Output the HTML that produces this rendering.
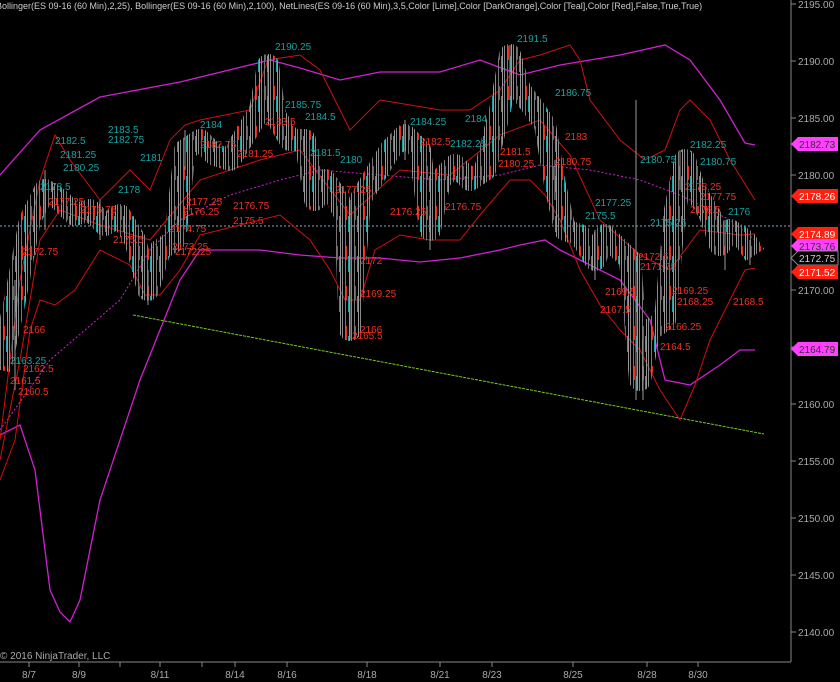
<!DOCTYPE html>
<html><head><meta charset="utf-8"><style>
html,body{margin:0;padding:0;background:#000;width:840px;height:682px;overflow:hidden}
svg{display:block}
text{font-family:"Liberation Sans",sans-serif}
</style></head><body>
<svg width="840" height="682" viewBox="0 0 840 682" xmlns="http://www.w3.org/2000/svg">
<defs>
<pattern id="cd" x="0" y="0" width="9" height="40" patternUnits="userSpaceOnUse">
<rect x="0" y="0" width="1" height="40" fill="#8a8a8a"/>
<rect x="3" y="6" width="2" height="14" fill="#e03020"/>
<rect x="3" y="0" width="1" height="40" fill="#777"/>
<rect x="6" y="16" width="2" height="16" fill="#20a0a0"/>
<rect x="7" y="0" width="1" height="40" fill="#999"/>
</pattern>
</defs>
<rect width="840" height="682" fill="#000"/>
<line x1="791" y1="0" x2="791" y2="662" stroke="#888" stroke-width="1"/>
<line x1="0" y1="662" x2="791" y2="662" stroke="#888" stroke-width="1"/>
<g fill="#aaa" font-size="10">
<text x="798" y="8">2195.00</text><text x="798" y="65">2190.00</text><text x="798" y="122">2185.00</text><text x="798" y="179">2180.00</text>
<text x="798" y="465">2155.00</text><text x="798" y="522">2150.00</text><text x="798" y="579">2145.00</text><text x="798" y="636">2140.00</text>
<text x="798" y="294">2170.00</text><text x="798" y="408">2160.00</text><text x="798" y="351">2165.00</text>
</g>
<g stroke="#888">
<line x1="791" y1="4" x2="796" y2="4"/><line x1="791" y1="61" x2="796" y2="61"/><line x1="791" y1="118" x2="796" y2="118"/><line x1="791" y1="175" x2="796" y2="175"/><line x1="791" y1="290" x2="796" y2="290"/><line x1="791" y1="347" x2="796" y2="347"/><line x1="791" y1="404" x2="796" y2="404"/><line x1="791" y1="461" x2="796" y2="461"/><line x1="791" y1="518" x2="796" y2="518"/><line x1="791" y1="575" x2="796" y2="575"/><line x1="791" y1="632" x2="796" y2="632"/>
<line x1="29" y1="662" x2="29" y2="667"/><line x1="79" y1="662" x2="79" y2="667"/><line x1="120" y1="662" x2="120" y2="667"/><line x1="160" y1="662" x2="160" y2="667"/><line x1="202" y1="662" x2="202" y2="667"/><line x1="235" y1="662" x2="235" y2="667"/><line x1="287" y1="662" x2="287" y2="667"/><line x1="367" y1="662" x2="367" y2="667"/><line x1="440" y1="662" x2="440" y2="667"/><line x1="492" y1="662" x2="492" y2="667"/><line x1="573" y1="662" x2="573" y2="667"/><line x1="647" y1="662" x2="647" y2="667"/><line x1="698" y1="662" x2="698" y2="667"/>
</g>
<g fill="#aaa" font-size="10" text-anchor="middle">
<text x="29" y="678">8/7</text><text x="79" y="678">8/9</text><text x="160" y="678">8/11</text><text x="235" y="678">8/14</text><text x="287" y="678">8/16</text><text x="367" y="678">8/18</text><text x="440" y="678">8/21</text><text x="492" y="678">8/23</text><text x="573" y="678">8/25</text><text x="647" y="678">8/28</text><text x="698" y="678">8/30</text>
</g>
<text x="0" y="659" fill="#aaa" font-size="10">© 2016 NinjaTrader, LLC</text>
<text x="-4" y="9" fill="#ccc" font-size="9">Bollinger(ES 09-16 (60 Min),2,25), Bollinger(ES 09-16 (60 Min),2,100), NetLines(ES 09-16 (60 Min),3,5,Color [Lime],Color [DarkOrange],Color [Teal],Color [Red],False,True,True)</text>
<line x1="0" y1="226" x2="791" y2="226" stroke="#8ab" stroke-dasharray="2,2"/>
<line x1="133" y1="315" x2="764" y2="434" stroke="#7c2" stroke-dasharray="3,1" stroke-width="1"/>
<g fill="none" stroke="#d020d0" stroke-width="1.3">
<polyline points="0,175 40,130 100,97 180,82 270,60 300,68 340,80 380,72 440,72 480,60 520,75 560,65 620,55 665,45 690,60 720,100 745,143 755,145"/>
<polyline points="0,435 20,425 35,470 50,590 60,612 70,622 80,600 100,500 140,380 180,280 200,250 260,250 300,255 340,258 380,258 420,262 460,258 500,250 520,245 545,240 560,250 580,260 620,280 650,320 665,380 690,385 720,365 740,350 755,350"/>
<polyline stroke-dasharray="2,2" stroke-width="1" points="0,430 50,360 120,300 150,250 180,220 230,195 280,180 320,170 380,175 440,180 500,175 540,165 590,170 640,180 680,195 730,220 755,240"/>
</g>
<g fill="none" stroke="#d01010" stroke-width="1">
<polyline points="0,440 20,280 40,180 55,135 70,160 100,200 130,170 150,190 170,140 185,125 200,120 250,110 268,60 300,55 320,70 350,130 380,100 410,105 440,110 470,110 500,90 520,60 540,55 570,45 580,60 590,100 620,140 645,160 665,150 680,110 690,100 710,120 730,160 755,200"/>
<polyline points="0,480 15,440 30,330 40,300 55,305 75,290 100,250 130,265 145,295 160,295 180,270 200,235 240,225 280,215 310,240 330,270 345,300 360,300 375,250 400,235 430,240 460,240 480,215 510,180 530,180 545,195 560,220 580,270 600,305 620,330 640,350 660,390 680,420 695,385 710,340 730,300 745,270 755,268"/>
<polyline points="0,460 20,360 40,240 60,210 100,225 150,240 200,180 260,160 300,150 350,215 400,170 450,175 500,135 540,120 570,155 600,220 640,255 670,270 700,230 740,235 755,234"/>
</g>
<g fill="none">
<polyline stroke="url(#cd)" stroke-width="22" stroke-linejoin="round" points="0,370 15,300 30,220 45,190 60,200 75,215 90,210 105,225 120,215 135,240 148,290 160,250 175,240 185,150 200,140 215,155 230,160 245,135 260,110 268,65 275,115 290,140 305,140 315,200 325,180 335,195 345,215 350,330 360,200 375,175 390,150 405,135 420,150 430,230 440,180 455,165 470,180 485,170 500,110 510,55 520,90 535,110 545,125 555,185 565,230 580,235 595,260 605,235 620,250 630,260 640,380 650,330 665,320 675,210 685,160 695,190 710,215 720,245 730,230 745,240 755,255"/>
<path stroke="#9a9a9a" stroke-width="1" d="M15,280V390M45,170V230M100,200V240M148,270V305M185,130V170M268,55V110M350,200V340M405,120V160M430,200V250M510,45V100M555,160V200M595,230V280M636,100V400M643,340V400M680,150V190M725,220V270M750,240V265"/>
</g>
<g fill="#19a0a0" font-size="10">
<text x="275" y="50">2190.25</text><text x="517" y="42">2191.5</text><text x="555" y="96">2186.75</text><text x="285" y="108">2185.75</text>
<text x="55" y="144">2182.5</text><text x="108" y="133">2183.5</text><text x="108" y="143">2182.75</text><text x="60" y="158">2181.25</text>
<text x="140" y="161">2181</text><text x="63" y="171">2180.25</text><text x="40" y="190">2178.5</text><text x="118" y="193">2178</text>
<text x="310" y="156">2181.5</text><text x="340" y="163">2180</text><text x="410" y="125">2184.25</text><text x="450" y="147">2182.25</text>
<text x="465" y="122">2184</text><text x="640" y="163">2180.75</text><text x="690" y="148">2182.25</text><text x="700" y="165">2180.75</text>
<text x="595" y="206">2177.25</text><text x="585" y="219">2175.5</text><text x="728" y="215">2176</text><text x="200" y="128">2184</text>
<text x="650" y="226">2175.25</text><text x="10" y="364">2163.25</text><text x="305" y="120">2184.5</text>
</g>
<g fill="#f03020" font-size="10">
<text x="186" y="205">2177.25</text><text x="183" y="215">2176.25</text><text x="233" y="209">2176.75</text><text x="233" y="224">2175.5</text>
<text x="22" y="255">2172.75</text><text x="113" y="243">2175.5</text><text x="170" y="232">2174.75</text><text x="172" y="250">2173.25</text>
<text x="175" y="255">2172.25</text><text x="237" y="157">2181.25</text><text x="335" y="193">2177.25</text><text x="390" y="215">2176.25</text>
<text x="360" y="264">2172</text><text x="360" y="297">2169.25</text><text x="360" y="333">2166</text><text x="352" y="339">2165.5</text>
<text x="445" y="210">2176.75</text><text x="420" y="145">2182.5</text><text x="500" y="155">2181.5</text><text x="498" y="167">2180.25</text>
<text x="555" y="165">2180.75</text><text x="565" y="140">2183</text><text x="638" y="260">2172.5</text><text x="640" y="270">2171.75</text>
<text x="605" y="295">2169.5</text><text x="600" y="313">2167.5</text><text x="672" y="294">2169.25</text><text x="677" y="305">2168.25</text>
<text x="733" y="305">2168.5</text><text x="665" y="330">2166.25</text><text x="660" y="350">2164.5</text><text x="700" y="200">2177.75</text>
<text x="690" y="213">2176.5</text><text x="23" y="333">2166</text><text x="23" y="372">2162.5</text><text x="10" y="384">2161.5</text>
<text x="18" y="395">2160.5</text><text x="265" y="125">2183.5</text><text x="200" y="148">2182.75</text><text x="685" y="190">2178.25</text>
<text x="48" y="205">2177.25</text><text x="80" y="213">2176.75</text>
</g>
<g font-size="10">
<polygon points="791,144 798,137 838,137 838,151 798,151" fill="#ff40ff"/><text x="799" y="148" fill="#333">2182.73</text>
<polygon points="791,196 798,189 838,189 838,203 798,203" fill="#ff2010"/><text x="799" y="200" fill="#fff">2178.26</text>
<polygon points="791,234 798,227 838,227 838,241 798,241" fill="#ff2010"/><text x="799" y="238" fill="#fff">2174.89</text>
<polygon points="791,246 798,239 838,239 838,253 798,253" fill="#ff40ff"/><text x="799" y="250" fill="#333">2173.76</text>
<polygon points="791,258 798,251 838,251 838,265 798,265" fill="#000" stroke="#888"/><text x="799" y="262" fill="#ccc">2172.75</text>
<polygon points="791,272 798,265 838,265 838,279 798,279" fill="#ff2010"/><text x="799" y="276" fill="#fff">2171.52</text>
<polygon points="791,349 798,342 838,342 838,356 798,356" fill="#ff40ff"/><text x="799" y="353" fill="#333">2164.79</text>
</g>
</svg>
</body></html>
